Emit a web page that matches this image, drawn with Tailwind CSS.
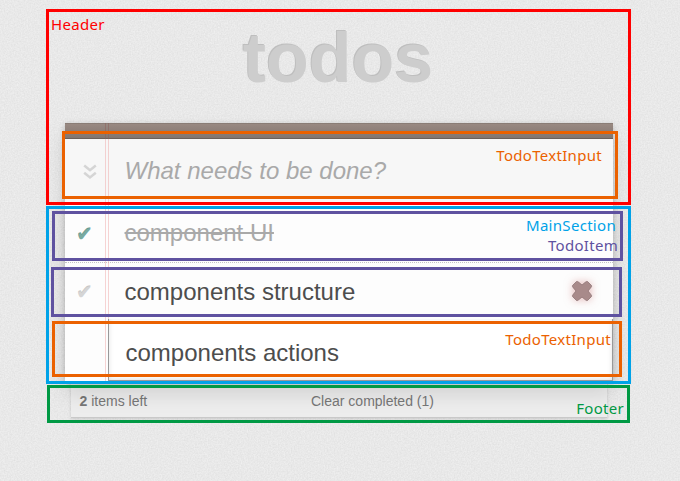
<!DOCTYPE html>
<html lang="en">
<head>
<meta charset="utf-8">
<title>todos</title>
<script src="https://cdn.jsdelivr.net/npm/@tailwindcss/browser@4"></script>
</head>
<body class="relative h-[481px] w-[680px] overflow-hidden bg-[#e8e8e8] font-['Liberation_Sans',sans-serif] text-[#4d4d4d]">
<!-- paper texture -->
<svg class="absolute inset-0 h-full w-full" aria-hidden="true">
  <filter id="grain" x="0" y="0" width="100%" height="100%" color-interpolation-filters="sRGB">
    <feTurbulence type="fractalNoise" baseFrequency="0.7" numOctaves="2" seed="4"/>
    <feColorMatrix values="0.08 0 0 0 0.872  0.08 0 0 0 0.872  0.08 0 0 0 0.872  0 0 0 0 1"/>
  </filter>
  <rect width="680" height="481" fill="#e8e8e8" filter="url(#grain)"/>
</svg>

<main class="relative ml-[65px] w-[548px]">
  <h1 class="h-[123px] pt-[22px] text-center text-[70px] leading-[72px] font-bold text-[#cdcdcd] [text-shadow:-1px_-1px_0_#bebebe]"><span class="relative -left-[1px]">todos</span></h1>

  <section class="relative z-10 h-[258px] bg-[#fdfdfd] shadow-[0_2px_6px_0_rgba(0,0,0,0.2),0_12px_20px_0_rgba(0,0,0,0.13)]">
    <div class="h-4 border-t border-b border-t-[#8a7d76] border-b-[#6c615c] bg-gradient-to-b from-[#998982] to-[#827670]"></div>
    <div class="flex h-[63px] items-center bg-[#f7f7f7]">
      <div class="flex w-[60px] justify-center">
        <svg class="mt-[2px] ml-[-11px] h-4 w-[14px]" viewBox="0 0 14 16" fill="none" stroke="#d5d5d5" stroke-width="2.5"><path d="M1.200 1.500 7 6.200 12.800 1.500M1.200 8.700 7 13.400 12.800 8.700"/></svg>
      </div>
      <p class="-ml-[0.5px] text-2xl leading-none text-[#a9a9a9] italic">What needs to be done?</p>
    </div>
    <ul>
      <li class="flex h-[61px] items-center border-b border-dotted border-[#c4c4c4] pt-[2px]">
        <span class="w-[59.5px] pt-[1px] pl-[11px] font-['DejaVu_Sans',sans-serif] text-[20px] leading-none text-[#78aaa0] [text-shadow:0_-1px_0_#669991]">✔</span>
        <span class="text-2xl leading-none text-[#a9a9a9] line-through">component UI</span>
      </li>
      <li class="flex h-[56px] items-center pt-[2px]">
        <span class="w-[59.5px] pl-[11px] font-['DejaVu_Sans',sans-serif] text-[20px] leading-none text-[#d5d5d5] [text-shadow:0_-1px_0_#c4c4c4]">✔</span>
        <span class="text-2xl leading-none">components structure</span>
        <svg class="mr-5 mb-[2px] ml-auto h-[22px] w-[22px] overflow-visible drop-shadow-[0_0_4px_rgba(199,107,107,0.5)]" viewBox="0 0 22 22"><path d="M5.500 1.500Q6.500 1 8 2.500L11 5 14 2.500Q15.500 1 16.500 1.500L20.500 5.500Q21 6.500 19.500 8L17 11 19.500 14Q21 15.500 20.500 16.500L16.500 20.500Q15.500 21 14 19.500L11 17 8 19.500Q6.500 21 5.500 20.500L1.500 16.500Q1 15.500 2.500 14L5 11 2.500 8Q1 6.500 1.500 5.500Z" fill="#a88a8a" stroke="#8e7475" stroke-width=".8" stroke-linejoin="round"/></svg>
      </li>
      <li class="flex h-[62px] items-center">
        <span class="h-full w-[43px]"></span>
        <span class="relative z-10 flex h-full flex-1 items-center border border-t-0 border-[#999] bg-white pt-[7px] pl-[16.5px] text-2xl leading-none shadow-[inset_0_-1px_5px_rgba(0,0,0,0.12)]">components actions</span>
      </li>
    </ul>
    <!-- ruled margin -->
    <div class="pointer-events-none absolute top-0 left-10 h-4 w-1 border-x border-[#8b5f5a]/50"></div>
    <div class="pointer-events-none absolute top-4 bottom-0 left-10 w-1 border-x border-[#f0a9a9]/50"></div>
  </section>

  <footer class="relative mx-[6px] flex h-[37px] items-center border-b border-[#c9c9c9] bg-[#ededed] pt-1 text-sm leading-none text-[#777] shadow-[0_1px_3px_rgba(0,0,0,0.15)]">
    <span class="w-[240px] pl-[8.500px]"><b>2</b> items left</span>
    <span>Clear completed (1)</span>
  </footer>
</main>

<!-- component outlines -->
<div class="absolute inset-0 z-20 font-['Noto_Sans',sans-serif] text-[15px] leading-5 tracking-[0.3px]">
  <div class="absolute top-[9px] left-[46px] h-[196px] w-[585px] border-3 border-[#ff0000]"></div>
  <div class="absolute top-[206px] left-[46px] h-[178px] w-[585px] border-3 border-[#00a2e8]"></div>
  <div class="absolute top-[131px] left-[62px] h-[68px] w-[556px] border-3 border-[#eb6100]"></div>
  <div class="absolute top-[211px] left-[52px] h-[50px] w-[571px] border-3 border-[#5f52a0]"></div>
  <div class="absolute top-[267px] left-[51px] h-[50px] w-[571px] border-3 border-[#5f52a0]"></div>
  <div class="absolute top-[321px] left-[52px] h-[56px] w-[570px] border-3 border-[#eb6100]"></div>
  <div class="absolute top-[385px] left-[47px] h-[38px] w-[583px] border-3 border-[#009944]"></div>
  <span class="absolute top-[14px] left-[51px] text-[#ff0000]">Header</span>
  <span class="absolute top-[145px] right-[78px] text-[#eb6100]">TodoTextInput</span>
  <span class="absolute top-[215px] right-[64px] text-[#00a2e8]">MainSection</span>
  <span class="absolute top-[235px] right-[62px] text-[#5f52a0]">TodoItem</span>
  <span class="absolute top-[329px] right-[69px] text-[#eb6100]">TodoTextInput</span>
  <span class="absolute top-[398px] right-[56px] text-[#009944]">Footer</span>
</div>
</body>
</html>
